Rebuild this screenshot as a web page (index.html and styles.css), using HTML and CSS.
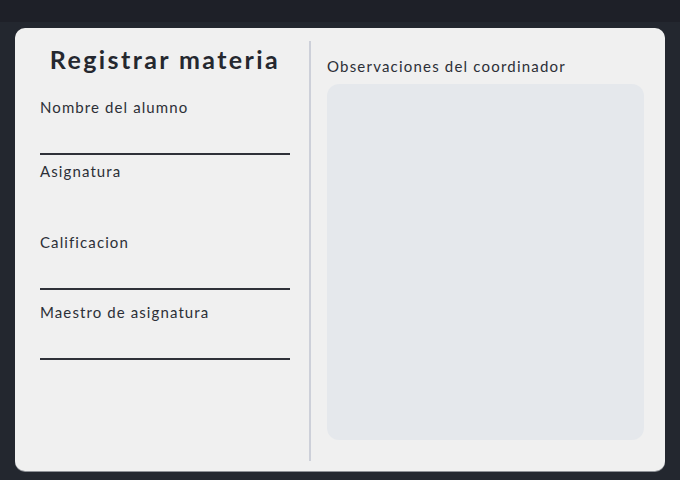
FILE: index.html
```html
<!DOCTYPE html>
<html lang="es">
<head>
<meta charset="utf-8">
<title>Registrar materia</title>
<link rel="stylesheet" href="styles.css">
</head>
<body>
<div class="topbar"></div>
<main class="page">
  <section class="card">
    <div class="left">
      <h1 class="title">Registrar materia</h1>
      <div class="field f1">
        <label class="label">Nombre del alumno</label>
        <div class="input lined"></div>
      </div>
      <div class="field f2">
        <label class="label">Asignatura</label>
        <div class="input"></div>
      </div>
      <div class="field f3">
        <label class="label">Calificacion</label>
        <div class="input lined"></div>
      </div>
      <div class="field f4">
        <label class="label">Maestro de asignatura</label>
        <div class="input lined"></div>
      </div>
    </div>
    <div class="divider"></div>
    <div class="right">
      <label class="label obs">Observaciones del coordinador</label>
      <div class="textarea"></div>
    </div>
  </section>
</main>
</body>
</html>
```
FILE: styles.css
```css
* { box-sizing: border-box; }
html, body { margin: 0; padding: 0; }
body {
  width: 680px;
  height: 480px;
  background: #23272f;
  font-family: Lato, "Open Sans", sans-serif;
  color: #2a2d35;
  overflow: hidden;
}
.topbar {
  height: 22px;
  background: #1e2028;
}
.page {
  padding: 6px 15px 0 15px;
}
.card {
  height: 443px;
  background: #f0f0f0;
  border-radius: 10px;
  box-shadow: 0 1px 0 #8d9096;
  padding: 13px 21px 10px 25px;
  display: flex;
}
.left {
  width: 250px;
  display: flex;
  flex-direction: column;
}
.title {
  margin: 0;
  text-align: center;
  font-size: 25px;
  font-weight: 700;
  letter-spacing: 2.4px;
  line-height: 36px;
  color: #25282f;
}
.label {
  display: block;
  font-size: 15px;
  line-height: 20px;
  letter-spacing: 1.1px;
  color: #2c2f37;
}
.field {
  display: flex;
  flex-direction: column;
}
.f1 { margin-top: 20px; }
.f2 { margin-top: 6px; }
.f3 { margin-top: 13px; }
.f4 { margin-top: 12px; }
.input {
  height: 38px;
}
.input.lined {
  border-bottom: 2px solid #2f3138;
}
.divider {
  background: #cdd0d9;
  width: 2px;
  height: 420px;
  margin: 0 16px 0 19px;
}
.right {
  width: 317px;
  display: flex;
  flex-direction: column;
  gap: 8px;
}
.obs { margin-top: 15px; letter-spacing: 1.2px; }
.textarea {
  height: 356px;
  background: #e5e8ec;
  border-radius: 12px;
}
```
